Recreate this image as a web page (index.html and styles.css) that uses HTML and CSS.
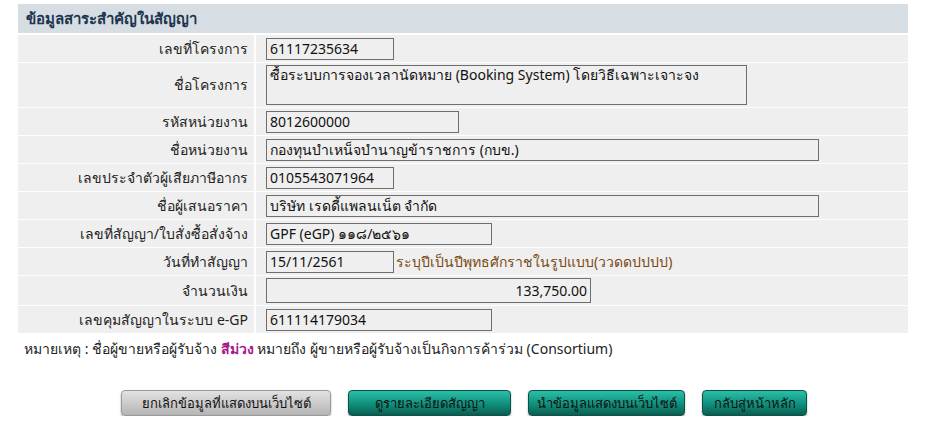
FILE: index.html
```
<!DOCTYPE html>
<html lang="th">
<head>
<meta charset="utf-8">
<link rel="stylesheet" href="styles.css">
</head>
<body>
<table class="info">
  <tr><th class="head" colspan="2">ข้อมูลสาระสำคัญในสัญญา</th></tr>
  <tr class="r1"><td class="lbl">เลขที่โครงการ</td><td class="val"><div class="box w128">61117235634</div></td></tr>
  <tr class="r2"><td class="lbl">ชื่อโครงการ</td><td class="val"><div class="box area">ซื้อระบบการจองเวลานัดหมาย (Booking System) โดยวิธีเฉพาะเจาะจง</div></td></tr>
  <tr class="r3"><td class="lbl">รหัสหน่วยงาน</td><td class="val"><div class="box w193">8012600000</div></td></tr>
  <tr><td class="lbl">ชื่อหน่วยงาน</td><td class="val"><div class="box w553">กองทุนบำเหน็จบำนาญข้าราชการ (กบข.)</div></td></tr>
  <tr><td class="lbl">เลขประจำตัวผู้เสียภาษีอากร</td><td class="val"><div class="box w128">0105543071964</div></td></tr>
  <tr><td class="lbl">ชื่อผู้เสนอราคา</td><td class="val"><div class="box w553">บริษัท เรดดี้แพลนเน็ต จำกัด</div></td></tr>
  <tr><td class="lbl">เลขที่สัญญา/ใบสั่งซื้อสั่งจ้าง</td><td class="val"><div class="box w226">GPF (eGP) ๑๑๘/๒๕๖๑</div></td></tr>
  <tr><td class="lbl">วันที่ทำสัญญา</td><td class="val"><div class="inline"><div class="box w128">15/11/2561</div><span class="hint">ระบุปีเป็นปีพุทธศักราชในรูปแบบ(ววดดปปปป)</span></div></td></tr>
  <tr class="r9"><td class="lbl">จำนวนเงิน</td><td class="val"><div class="box w325 num">133,750.00</div></td></tr>
  <tr><td class="lbl">เลขคุมสัญญาในระบบ e-GP</td><td class="val"><div class="box w226">611114179034</div></td></tr>
</table>
<p class="note">หมายเหตุ : ชื่อผู้ขายหรือผู้รับจ้าง <b class="purple">สีม่วง</b> หมายถึง ผู้ขายหรือผู้รับจ้างเป็นกิจการค้าร่วม (Consortium)</p>
<div class="buttons">
  <button class="btn gray">ยกเลิกข้อมูลที่แสดงบนเว็บไซต์</button>
  <button class="btn teal b2">ดูรายละเอียดสัญญา</button>
  <button class="btn teal b3">นำข้อมูลแสดงบนเว็บไซต์</button>
  <button class="btn teal b4">กลับสู่หน้าหลัก</button>
</div>
</body>
</html>
```
FILE: styles.css
```
html, body { margin: 0; padding: 0; background: #fff; }
body {
  padding: 4px 0 0 18px;
  font-family: Tahoma, "Noto Sans", "DejaVu Sans", sans-serif;
  font-size: 13px;
  color: #222;
}
.info {
  width: 890px;
  border-collapse: collapse;
  border-spacing: 0;
}
.info td, .info th { padding: 0; }
.head {
  background: #d6dde3;
  color: #1e3550;
  text-align: left;
  font-weight: bold;
  font-size: 15px;
  height: 29px;
  padding-left: 8px !important;
  border-bottom: 2px solid #fff;
}
.info tr { background: #efefef; }
.info td { border-bottom: 1px solid #fff; height: 27px; }
.lbl {
  width: 230px;
  text-align: right;
  padding-right: 6px !important;
  border-right: 2px solid #fff;
  font-size: 14px;
}
.val { padding-left: 10px !important; font-size: 14px; }
.box {
  box-sizing: border-box;
  border: 1px solid #6e6e6e;
  height: 22px;
  line-height: 20px;
  padding: 0 3px;
  background: #efefef;
  color: #111;
  white-space: nowrap;
  overflow: hidden;
}
.w128 { width: 128px; }
.w193 { width: 193px; }
.w226 { width: 226px; }
.w325 { width: 325px; height: 25px; line-height: 23px; }
.w553 { width: 553px; }
.area { width: 481px; height: 40px; line-height: 18px; }
.r2 td { height: 44px; }
.r9 td { height: 29px; }
.num { text-align: right; }
.inline { display: flex; align-items: center; gap: 2px; }
.hint { color: #7a4a12; font-size: 14px; }
.note { margin: 4px 0 0 6px; font-size: 14px; color: #222; }
.purple { color: #a8188c; }
.buttons {
  display: flex;
  gap: 17px;
  margin: 30px 0 0 103px;
}
.btn {
  font-family: Tahoma, "Noto Sans", "DejaVu Sans", sans-serif;
  font-size: 13px;
  height: 26px;
  border-radius: 4px;
  padding: 0;
  white-space: nowrap;
  box-shadow: 0 1px 2px rgba(0,0,0,0.35);
  color: #111;
  border: none;
}
.gray {
  background: linear-gradient(#e2e2e2, #b5b5b5);
  border: 1px solid #9a9a9a;
  width: 210px;
}
.teal {
  background: linear-gradient(#2bbfa8, #0f8f7c 55%, #0b5d50);
  border: 1px solid #0a5346;
}
.b2 { width: 163px; }
.b3 { width: 157px; }
.b4 { width: 105px; }
```
